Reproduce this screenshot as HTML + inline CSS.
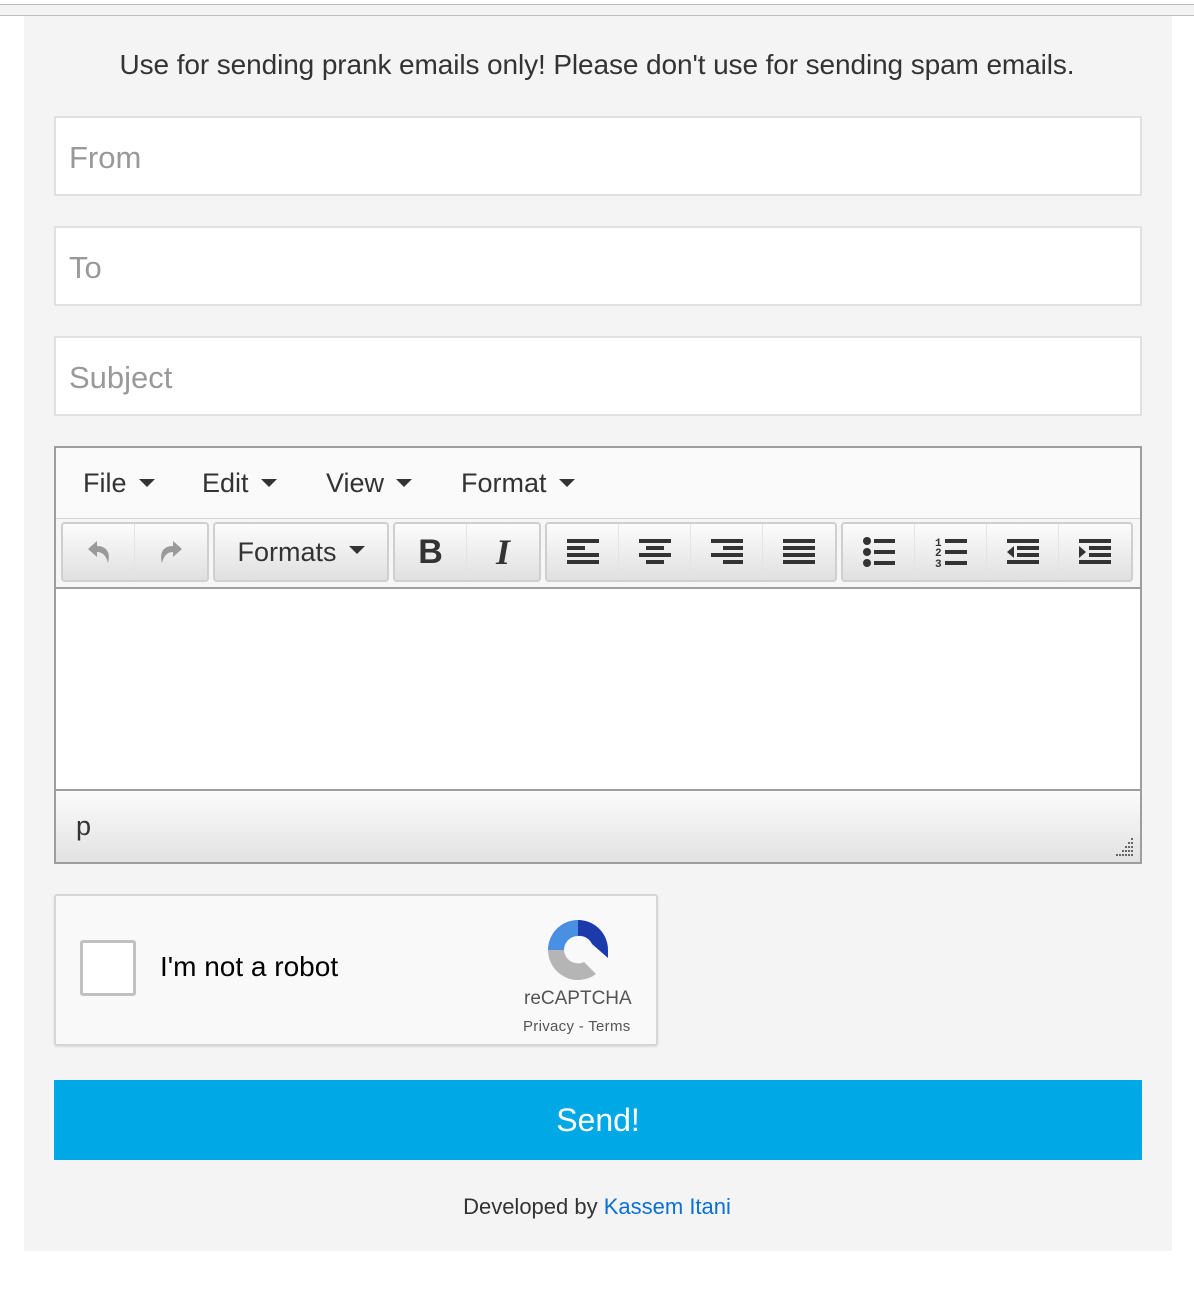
<!DOCTYPE html>
<html><head><meta charset="utf-8"><style>
*{box-sizing:border-box;margin:0;padding:0}
body{width:1194px;height:1290px;background:#fff;font-family:"Liberation Sans",Arial,sans-serif;position:relative;overflow:hidden}
.topbar{position:absolute;left:0;top:4px;width:1194px;height:12px;background:#f3f3f3;border-top:1px solid #bdbdbd;border-bottom:1px solid #bdbdbd}
.wrap{position:absolute;left:24px;top:16px;width:1148px;height:1235px;background:#f4f4f4}
.notice{position:absolute;left:0;width:1194px;top:49px;text-align:center;font-size:28px;color:#333;letter-spacing:-0.1px}
.inp{position:absolute;left:54px;width:1088px;height:80px;background:#fff;border:2px solid #e1e1e1;font-size:31px;color:#999;padding:22px 13px}
.ed{position:absolute;left:54px;top:446px;width:1088px;height:418px;border:2px solid #9e9e9e;background:#fff}
.menu{height:72px;background:#fafafa;border-bottom:2px solid #d4d4d4;font-size:27px;color:#333}
.menu span{position:absolute;top:20px}
.caret{display:inline-block;width:0;height:0;border-left:8px solid transparent;border-right:8px solid transparent;border-top:8px solid #333;vertical-align:middle;margin-left:12px;margin-top:-4px}
.tb{position:absolute;top:71px;left:0;width:1084px;height:70px;background:#f6f6f6;border-bottom:2px solid #9e9e9e}
.g{position:absolute;top:3px;height:60px;border:2px solid #cfcfcf;border-radius:4px;background:linear-gradient(#fcfcfc,#e0e0e0);display:flex}
.g div{width:72px;height:56px;border-right:1px solid #e4e4e4;display:flex;align-items:center;justify-content:center}
.g div:last-child{border-right:none}
.status{position:absolute;left:0;top:341px;width:1084px;height:73px;background:linear-gradient(#fbfbfb,#e2e2e2);border-top:2px solid #9e9e9e;font-size:27px;color:#333;padding:20px 20px}
.cap{position:absolute;left:54px;top:894px;width:604px;height:152px;background:#f9f9f9;border:2px solid #d6d6d6;border-radius:3px;box-shadow:0 1px 2px rgba(0,0,0,.1)}
.cb{position:absolute;left:24px;top:44px;width:56px;height:56px;background:#fff;border:3px solid #c1c1c1;border-radius:3px}
.btn{position:absolute;left:54px;top:1080px;width:1088px;height:80px;background:#00a8e6;color:#fff;font-size:32px;text-align:center;line-height:80px}
.foot{position:absolute;left:0;width:1194px;top:1194px;text-align:center;font-size:22px;color:#333}
.foot a{color:#0a6fd6;text-decoration:none}
</style></head><body>
<div class="topbar"></div>
<div class="wrap"></div>
<div class="notice">Use for sending prank emails only! Please don't use for sending spam emails.</div>
<div class="inp" style="top:116px">From</div>
<div class="inp" style="top:226px">To</div>
<div class="inp" style="top:336px">Subject</div>
<div class="ed">
 <div class="menu">
  <span style="left:27px">File<i class="caret"></i></span>
  <span style="left:146px">Edit<i class="caret"></i></span>
  <span style="left:270px">View<i class="caret"></i></span>
  <span style="left:405px">Format<i class="caret"></i></span>
 </div>
 <div class="tb">
  <div class="g" style="left:5px;width:148px">
   <div><svg width="30" height="30" viewBox="0 0 30 30"><path d="M4 12 L13 4 V9 C22 9 27 15 24 26 C22 18 18 15 13 15 V20 Z" fill="#9a9a9a"/></svg></div>
   <div><svg width="30" height="30" viewBox="0 0 30 30"><path d="M26 12 L17 4 V9 C8 9 3 15 6 26 C8 18 12 15 17 15 V20 Z" fill="#9a9a9a"/></svg></div>
  </div>
  <div class="g" style="left:157px;width:176px"><div style="width:172px;font-size:27px;color:#333">Formats<i class="caret"></i></div></div>
  <div class="g" style="left:337px;width:148px">
   <div style="font-size:34px;font-weight:bold;color:#333">B</div>
   <div style="font-size:36px;font-style:italic;font-family:'Liberation Serif',serif;color:#333;font-weight:bold">I</div>
  </div>
  <div class="g" style="left:489px;width:292px">
   <div><svg width="32" height="30"><g fill="#333"><rect x="0" y="2" width="32" height="4"/><rect x="0" y="9" width="18" height="4"/><rect x="0" y="16" width="32" height="4"/><rect x="0" y="23" width="32" height="4"/></g></svg></div>
   <div><svg width="32" height="30"><g fill="#333"><rect x="0" y="2" width="32" height="4"/><rect x="7" y="9" width="18" height="4"/><rect x="0" y="16" width="32" height="4"/><rect x="7" y="23" width="18" height="4"/></g></svg></div>
   <div><svg width="32" height="30"><g fill="#333"><rect x="0" y="2" width="32" height="4"/><rect x="12" y="9" width="20" height="4"/><rect x="0" y="16" width="32" height="4"/><rect x="12" y="23" width="20" height="4"/></g></svg></div>
   <div><svg width="32" height="30"><g fill="#333"><rect x="0" y="2" width="32" height="4"/><rect x="0" y="9" width="32" height="4"/><rect x="0" y="16" width="32" height="4"/><rect x="0" y="23" width="32" height="4"/></g></svg></div>
  </div>
  <div class="g" style="left:785px;width:292px">
   <div><svg width="32" height="30"><g fill="#333"><circle cx="4" cy="4" r="4"/><circle cx="4" cy="15" r="4"/><circle cx="4" cy="26" r="4"/><rect x="11" y="2" width="21" height="4"/><rect x="11" y="13" width="21" height="4"/><rect x="11" y="24" width="21" height="4"/></g></svg></div>
   <div><svg width="32" height="30"><g fill="#333"><text x="0" y="9" font-size="11" font-family="Liberation Mono" font-weight="bold">1</text><text x="0" y="19" font-size="11" font-family="Liberation Mono" font-weight="bold">2</text><text x="0" y="30" font-size="11" font-family="Liberation Mono" font-weight="bold">3</text><rect x="10" y="2" width="22" height="4"/><rect x="10" y="13" width="22" height="4"/><rect x="10" y="24" width="22" height="4"/></g></svg></div>
   <div><svg width="32" height="30"><g fill="#333"><rect x="0" y="2" width="32" height="4"/><path d="M0 15 L7 9 V21 Z"/><rect x="10" y="9" width="22" height="4"/><rect x="10" y="16" width="22" height="4"/><rect x="0" y="23" width="32" height="4"/></g></svg></div>
   <div><svg width="32" height="30"><g fill="#333"><rect x="0" y="2" width="32" height="4"/><path d="M0 9 L7 15 L0 21 Z"/><rect x="10" y="9" width="22" height="4"/><rect x="10" y="16" width="22" height="4"/><rect x="0" y="23" width="32" height="4"/></g></svg></div>
  </div>
 </div>
 <div class="status">p
  <svg style="position:absolute;right:6px;bottom:6px" width="18" height="18"><g fill="#666"><rect x="15" y="0" width="2" height="2"/><rect x="12" y="4" width="2" height="2"/><rect x="15" y="4" width="2" height="2"/><rect x="9" y="8" width="2" height="2"/><rect x="12" y="8" width="2" height="2"/><rect x="15" y="8" width="2" height="2"/><rect x="6" y="12" width="2" height="2"/><rect x="9" y="12" width="2" height="2"/><rect x="12" y="12" width="2" height="2"/><rect x="15" y="12" width="2" height="2"/><rect x="0" y="16" width="2" height="2"/><rect x="3" y="16" width="2" height="2"/><rect x="6" y="16" width="2" height="2"/><rect x="9" y="16" width="2" height="2"/><rect x="12" y="16" width="2" height="2"/><rect x="15" y="16" width="2" height="2"/></g></svg>
 </div>
</div>
<div class="cap">
 <div class="cb"></div>
 <div style="position:absolute;left:104px;top:55px;font-size:28px;color:#000">I'm not a robot</div>
 <svg style="position:absolute;left:490px;top:22px" width="64" height="64" viewBox="0 0 64 64">
  <path d="M32 2 A30 30 0 0 0 2 32 H18 A14 14 0 0 1 32 18 Z" fill="#4a90e2"/>
  <path d="M32 2 A30 30 0 0 1 62 32 L62 40 L46 26 A14 14 0 0 0 32 18 Z" fill="#1c3aa9"/>
  <path d="M2 32 A30 30 0 0 0 50 56 L38 44 A14 14 0 0 1 18 32 Z" fill="#b5b5b5"/>
 </svg>
 <div style="position:absolute;left:468px;top:92px;font-size:19px;color:#555">reCAPTCHA</div>
 <div style="position:absolute;left:467px;top:122px;font-size:15px;color:#555;letter-spacing:0.3px">Privacy - Terms</div>
</div>
<div class="btn">Send!</div>
<div class="foot">Developed by <a>Kassem Itani</a></div>
</body></html>
